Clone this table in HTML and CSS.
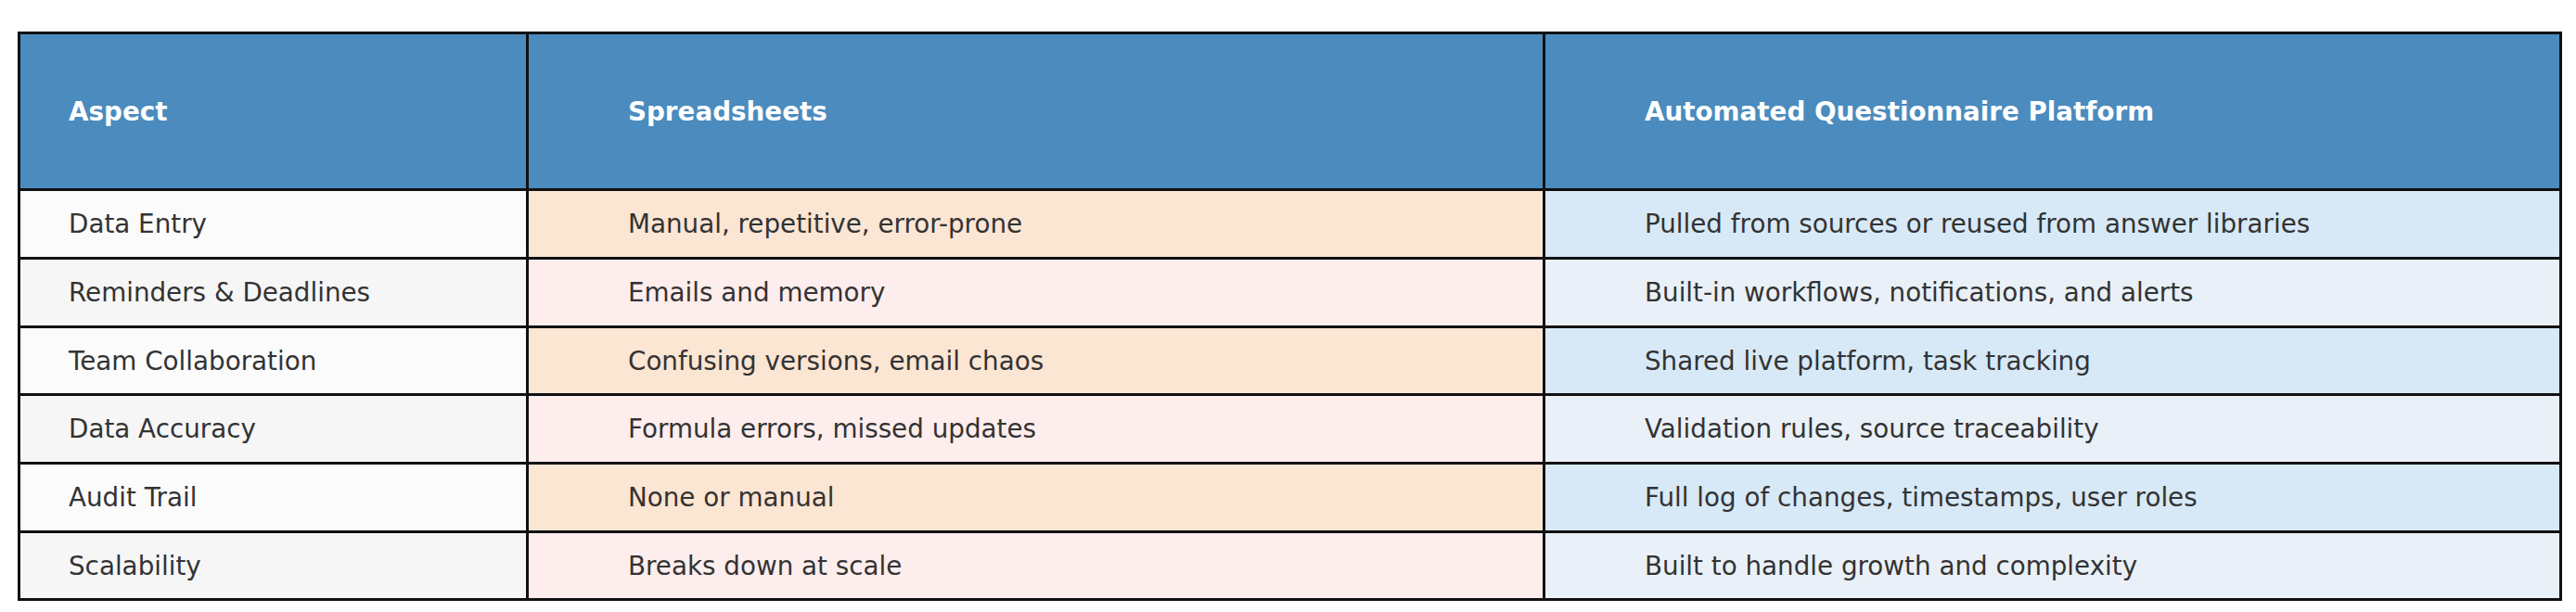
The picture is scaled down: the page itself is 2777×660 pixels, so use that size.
FILE: index.html
```html
<!DOCTYPE html>
<html>
<head>
<meta charset="utf-8">
<link rel="stylesheet" href="styles.css">
</head>
<body>
<table class="cmp">
  <colgroup>
    <col class="c1"><col class="c2"><col class="c3">
  </colgroup>
  <thead>
    <tr class="head">
      <th class="a">Aspect</th>
      <th class="b">Spreadsheets</th>
      <th class="b">Automated Questionnaire Platform</th>
    </tr>
  </thead>
  <tbody>
    <tr class="r1 h74"><td class="a">Data Entry</td><td class="b s">Manual, repetitive, error-prone</td><td class="b p">Pulled from sources or reused from answer libraries</td></tr>
    <tr class="r2 h74"><td class="a">Reminders &amp; Deadlines</td><td class="b s">Emails and memory</td><td class="b p">Built-in workflows, notifications, and alerts</td></tr>
    <tr class="r1 h73"><td class="a">Team Collaboration</td><td class="b s">Confusing versions, email chaos</td><td class="b p">Shared live platform, task tracking</td></tr>
    <tr class="r2 h74"><td class="a">Data Accuracy</td><td class="b s">Formula errors, missed updates</td><td class="b p">Validation rules, source traceability</td></tr>
    <tr class="r1 h74"><td class="a">Audit Trail</td><td class="b s">None or manual</td><td class="b p">Full log of changes, timestamps, user roles</td></tr>
    <tr class="r2 h73"><td class="a">Scalability</td><td class="b s">Breaks down at scale</td><td class="b p">Built to handle growth and complexity</td></tr>
  </tbody>
</table>
</body>
</html>
```
FILE: styles.css
```css
html, body {
  margin: 0;
  padding: 0;
  background: #ffffff;
}
body {
  padding: 34px 0 0 19px;
}
.cmp {
  border-collapse: separate;
  border-spacing: 0;
  table-layout: fixed;
  width: 2743px;
  border-top: 3px solid #111111;
  border-left: 3px solid #111111;
  font-family: "DejaVu Sans", sans-serif;
  font-size: 27.78px;
  color: #333333;
}
.c1 { width: 548px; }
.c2 { width: 1096px; }
.c3 { width: 1096px; }
.cmp th, .cmp td {
  border: 0;
  border-right: 3px solid #111111;
  border-bottom: 3px solid #111111;
  text-align: left;
  vertical-align: middle;
  padding: 0;
  white-space: nowrap;
  box-sizing: border-box;
}
.cmp .a { padding-left: 52px; }
.cmp .b { padding-left: 107px; }
.head { height: 169px; }
.head th {
  background: #4b8bbe;
  color: #ffffff;
  font-weight: bold;
}
.h74 { height: 74px; }
.h73 { height: 73px; }
.r1 .a { background: #fbfbfb; }
.r2 .a { background: #f6f6f6; }
.r1 .s { background: #fbe5d3; }
.r2 .s { background: #fdeded; }
.r1 .p { background: #d7e9f7; }
.r2 .p { background: #e9f0f8; }
```
